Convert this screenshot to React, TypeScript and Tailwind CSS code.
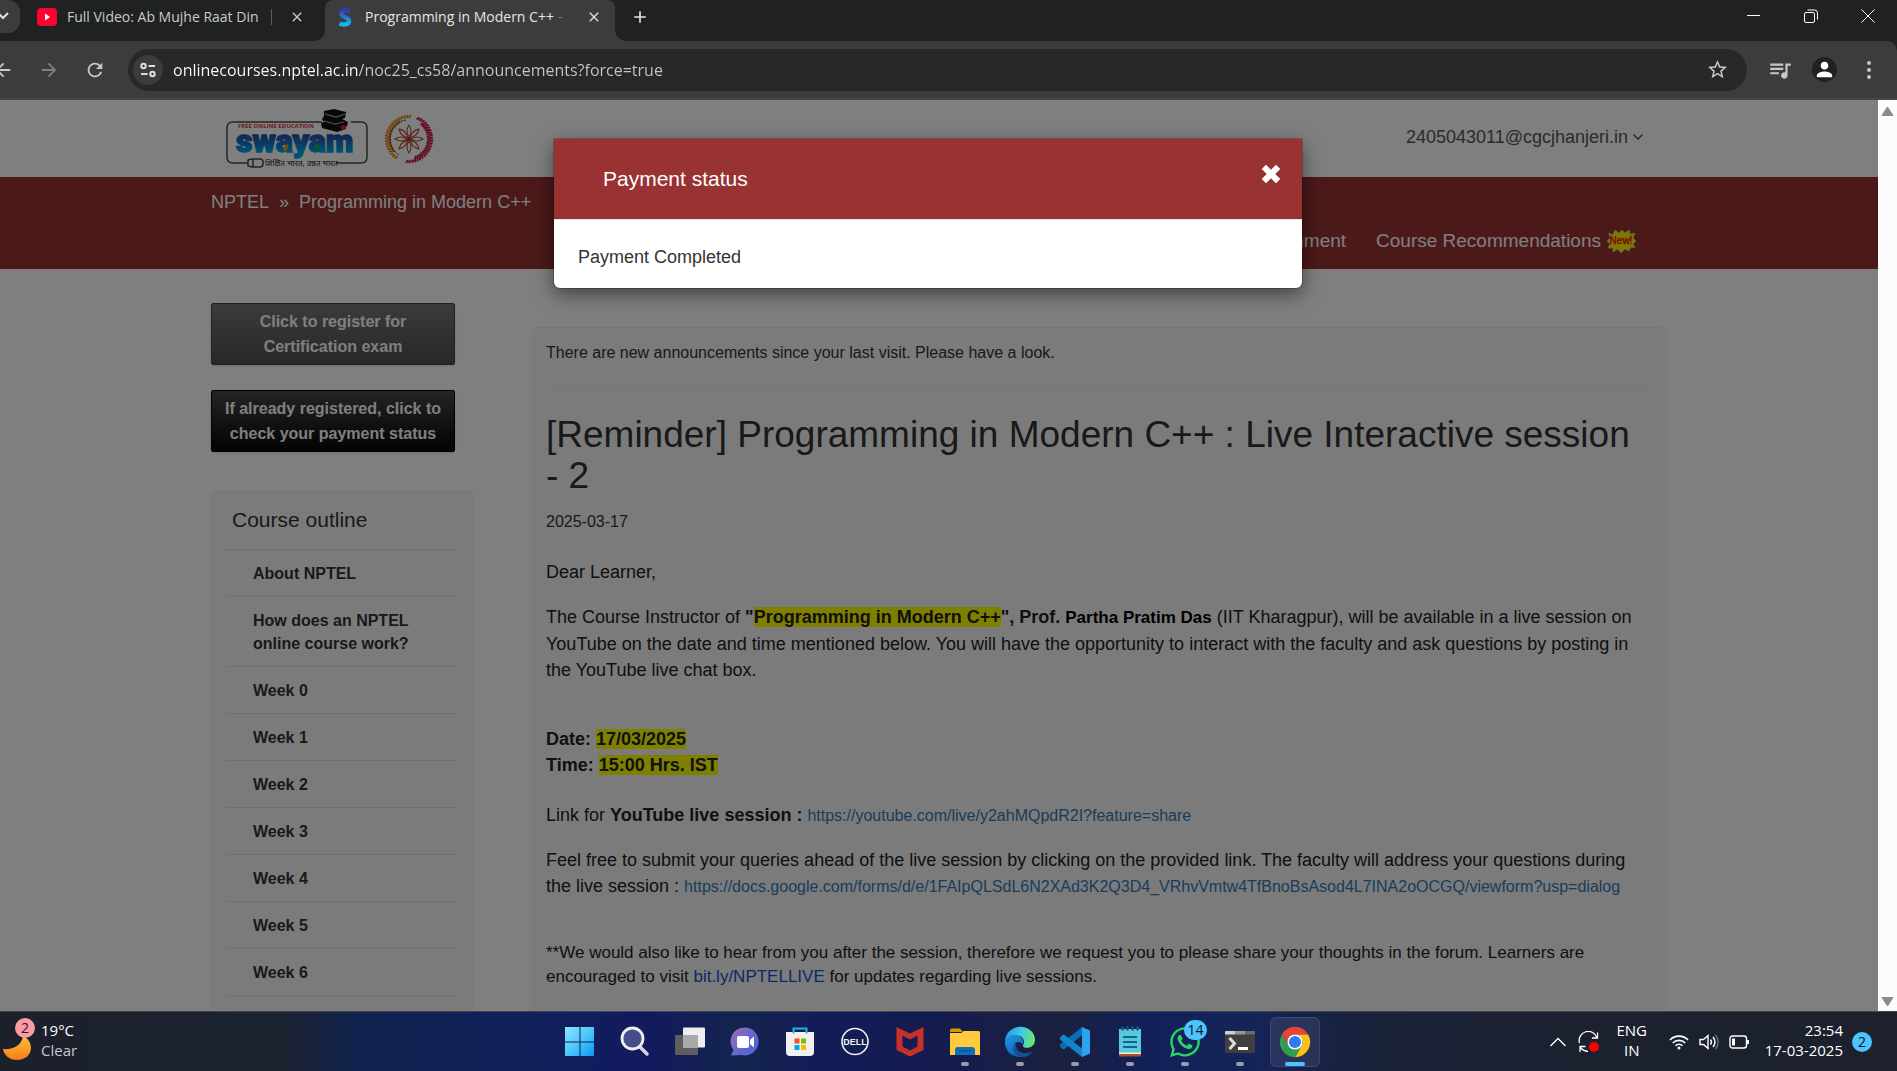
import type { ReactNode } from "react";
import { FaWhatsapp } from "react-icons/fa";
import { MdQueueMusic, MdPerson, MdStarOutline, MdClose, MdArrowBack, MdArrowForward, MdRefresh, MdAdd } from "react-icons/md";

function TabStrip() {
  return (
    <div className="flex h-[41px] shrink-0 justify-between bg-[#1f2221] text-[#e3e3e3]">
      <div className="flex items-start">
        <button aria-label="Search tabs" className="flex h-[33px] w-5 items-center justify-center rounded-r-xl bg-[#3c3c3c]">
          <svg viewBox="0 0 20 33" className="h-[33px] w-5" fill="none" stroke="#e3e3e3" strokeWidth="2">
            <path d="M-2 13l5 5 5-5" />
          </svg>
        </button>
        <div role="tab" className="flex h-[33px] w-[293px] items-center pl-[17px] text-[#c9cac9]">
          <svg viewBox="0 0 20 18" className="h-[18px] w-5 shrink-0">
            <rect width="20" height="18" rx="4" fill="#ff0033" />
            <path d="M8 5.500v7l5-3.500z" fill="#fff" />
          </svg>
          <span className="ml-[10px] whitespace-nowrap text-sm">Full Video: Ab Mujhe Raat Din</span>
          <span className="ml-auto h-4 w-px bg-[#5b5d5c]" />
          <button aria-label="Close tab" className="mr-2 ml-[17px]">
            <MdClose className="size-4" />
          </button>
        </div>
        <svg viewBox="0 0 12 41" className="h-[41px] w-3 shrink-0">
          <path d="M12 0v41H0c8 0 12-5 12-12z" fill="#3c3c3c" />
        </svg>
        <div role="tab" aria-selected="true" className="flex h-[41px] w-[290px] items-start rounded-t-lg bg-[#3c3c3c]">
          <div className="flex h-[33px] w-full items-center pl-3">
            <svg viewBox="0 0 16 24" className="h-6 w-4 shrink-0">
              <defs>
                <linearGradient id="fav" x1="0" y1="0" x2="0" y2="1">
                  <stop offset="0" stopColor="#3a3aa8" />
                  <stop offset="1" stopColor="#12b8f0" />
                </linearGradient>
              </defs>
              <path d="M13 6C10 4.500 4.500 4.500 4.500 8.500c0 4 7.500 3 7.500 7.500 0 4-6 4-9.500 2.500" fill="none" stroke="url(#fav)" strokeWidth="4.500" />
            </svg>
            <span className="ml-3 whitespace-nowrap text-sm text-[#e6e6e6]">Programming in Modern C++</span>
            <span className="ml-1 text-sm text-[#777]">-</span>
            <button aria-label="Close tab" className="ml-auto mr-[13px]">
              <MdClose className="size-4" />
            </button>
          </div>
        </div>
        <svg viewBox="0 0 12 41" className="h-[41px] w-3 shrink-0">
          <path d="M0 0v41h12C4 41 0 36 0 29z" fill="#3c3c3c" />
        </svg>
        <button aria-label="New tab" className="ml-[3px] flex h-[33px] w-5 items-center justify-center">
          <MdAdd className="size-5 shrink-0" />
        </button>
      </div>
      <div className="flex h-8 items-center gap-[43px] pr-[22px]">
        <button aria-label="Minimize">
          <svg viewBox="0 0 14 14" className="size-[14px]" stroke="#fff" fill="none">
            <path d="M0 6.500h13" />
          </svg>
        </button>
        <button aria-label="Restore">
          <svg viewBox="0 0 14 14" className="size-[14px]" stroke="#fff" fill="none">
            <rect x=".5" y="3.500" width="10" height="10" rx="1.500" />
            <path d="M3.500 1h7a3 3 0 0 1 3 3v6.500" />
          </svg>
        </button>
        <button aria-label="Close window">
          <svg viewBox="0 0 14 14" className="size-[14px]" stroke="#fff" fill="none">
            <path d="M.5.5l13 13M13.500.5l-13 13" />
          </svg>
        </button>
      </div>
    </div>
  );
}

function Toolbar() {
  return (
    <div className="shrink-0 bg-[#1f2221]">
      <div className="flex h-[59px] items-center rounded-tr-[10px] border-b-2 border-[#474747] bg-[#3c3c3c] text-[#c7c7c7]">
        <button aria-label="Back" className="-ml-2">
          <MdArrowBack className="size-[22px]" />
        </button>
        <button aria-label="Forward" className="ml-6 text-[#7f7f7f]">
          <MdArrowForward className="size-[22px]" />
        </button>
        <button aria-label="Reload" className="ml-6">
          <MdRefresh className="size-[22px]" />
        </button>
        <div className="ml-[22px] flex h-[42px] flex-1 items-center rounded-full bg-[#282828] pr-[18px] pl-[5px]">
          <button aria-label="Site information" className="flex size-[30px] items-center justify-center rounded-full bg-[#3c3c3c]">
            <svg viewBox="0 0 18 18" className="size-[18px]" fill="none" stroke="#dedede" strokeWidth="2">
              <circle cx="4.500" cy="5" r="2.200" />
              <path d="M9.500 5H16M2 13h6.500" />
              <circle cx="13.500" cy="13" r="2.200" />
            </svg>
          </button>
          <input
            aria-label="Address"
            defaultValue="onlinecourses.nptel.ac.in/noc25_cs58/announcements?force=true"
            className="ml-[10px] h-8 flex-1 bg-[linear-gradient(90deg,#ffffff_185px,#c7c7c7_185px)] bg-clip-text text-base text-transparent outline-none"
          />
          <button aria-label="Bookmark">
            <MdStarOutline className="size-[23px]" />
          </button>
        </div>
        <button aria-label="Media controls" className="ml-5">
          <MdQueueMusic className="size-[26px]" />
        </button>
        <button aria-label="Profile" className="ml-[19px] flex size-[25px] items-center justify-center rounded-full bg-[#1f2221]">
          <MdPerson className="size-[23px] text-white" />
        </button>
        <button aria-label="Menu" className="mr-[22px] ml-[26px] flex w-3 justify-center">
          <svg viewBox="0 0 4 20" className="h-5 w-1" fill="#c7c7c7">
            <circle cx="2" cy="3" r="2" />
            <circle cx="2" cy="10" r="2" />
            <circle cx="2" cy="17" r="2" />
          </svg>
        </button>
      </div>
    </div>
  );
}

function SwayamLogo() {
  return (
    <svg viewBox="0 0 142 60" className="h-[60px] w-[142px]" role="img" aria-label="Swayam">
      <defs>
        <linearGradient id="sw" x1="0" y1="0" x2="0" y2="1">
          <stop offset=".2" stopColor="#2e3192" />
          <stop offset=".8" stopColor="#00a4e4" />
        </linearGradient>
      </defs>
      <path d="M96 13H7Q1 13 1 19v29q0 6 6 6h14M110 54h25q6 0 6-6V19q0-6-6-6h-10" fill="none" stroke="#4a4a4a" strokeWidth="1.500" />
      <text x="12" y="19" fontSize="6" fontWeight="700" fill="#e03040" fontFamily="Open Sans, sans-serif">FREE ONLINE EDUCATION</text>
      <text x="10" y="43" fontSize="32" fontWeight="900" fill="url(#sw)" stroke="url(#sw)" strokeWidth="1.500" fontFamily="Roboto, sans-serif">swayam</text>
      <path d="M58 42c-2-4 1-6 3-7 2 3 1 7-3 7z" fill="#f7941d" />
      <path d="M90 42c-2-4 1-6 3-7 2 3 1 7-3 7z" fill="#1da64a" />
      <path d="M98 2l10-2 12 3-1 6-3 1 6 3-1 4-2 1 1 2-9 3-15-4-1-5 3-1-2-3 2-3z" fill="#111" />
      <path d="M99 5l11 3 9-3M98 12l11 3 9-2" stroke="#aaa" strokeWidth="1.200" fill="none" />
      <path d="M114 18l3-2 3 1 1-1-1 3-3 2z" fill="#ed1c24" />
      <path d="M22 51l4-1h8q3 0 3 3v2q0 3-3 3h-8l-4-1zM27 50v8" fill="none" stroke="#444" strokeWidth="1.500" />
      <text x="39" y="57" fontSize="8" fill="#222" fontFamily="Noto Sans, sans-serif">शिक्षित भारत, उन्नत भारत</text>
    </svg>
  );
}

const GOLD = Array.from({ length: 22 }, (_, i) => 125 + i * 7);
const CRIMSON = Array.from({ length: 24 }, (_, i) => -66 + i * 7);

function NptelEmblem() {
  return (
    <svg viewBox="0 0 50 50" className="size-[50px]" role="img" aria-label="NPTEL">
      {GOLD.map((a) => (
        <path key={a} d={a > 250 || a < 140 ? "M21 -1l3 2" : "M18 -2l6 3"} stroke="#e0912c" strokeWidth="2" transform={"translate(25 25) rotate(" + a + ")"} />
      ))}
      {CRIMSON.map((a) => (
        <path key={a} d={a < -45 || a > 80 ? "M21 -1l3 2" : "M18 -2l6 3"} stroke="#c8184a" strokeWidth="2" transform={"translate(25 25) rotate(" + a + ")"} />
      ))}
      <path d="M22 6A19 19 0 0 0 15 41" fill="none" stroke="#222" strokeWidth="1" strokeDasharray="2 1" />
      {[0, 45, 90, 135, 180, 225, 270, 315].map((a) => (
        <path key={a} d="M2 0Q8 -4 14 0Q8 4 2 0z" fill="none" stroke={a % 90 ? "#b0453c" : "#a85a28"} strokeWidth="1.100" transform={"translate(25 25) rotate(" + a + ")"} />
      ))}
      <circle cx="25" cy="25" r="2" fill="#c8184a" />
    </svg>
  );
}

function NewBadge() {
  return (
    <svg viewBox="0 0 30 24" className="h-6 w-[30px]" role="img" aria-label="New">
      <path d="M3 4l4 2 2-5 4 3 3-3 3 3 4-3 1 4 5-1-2 5 3 3-3 3 2 4-4-1-2 4-4-2-4 4-3-4-5 3 0-4-5 0 2-4-3-3 3-3z" fill="#fff200" stroke="#c9c98a" strokeWidth=".8" />
      <text x="15" y="15" fontSize="10" textAnchor="middle" fill="#f01010" stroke="#f01010" strokeWidth=".4" fontFamily="Liberation Sans, sans-serif">New!</text>
    </svg>
  );
}

const OUTLINE = ["About NPTEL", "How does an NPTEL online course work?", "Week 0", "Week 1", "Week 2", "Week 3", "Week 4", "Week 5", "Week 6"];

function Sidebar() {
  return (
    <aside className="w-[262px] shrink-0 pt-[34px]">
      <button className="block h-[62px] w-[244px] rounded-xs border border-[#444] bg-linear-to-b from-[#777] to-[#505050] text-base leading-[25px] font-bold text-white shadow">
        Click to register for
        <br />
        Certification exam
      </button>
      <button className="mt-[25px] block h-[62px] w-[244px] rounded-xs border border-black bg-linear-to-b from-[#484848] to-[#080808] text-base leading-[25px] font-bold text-white shadow">
        If already registered, click to
        <br />
        check your payment status
      </button>
      <nav className="mt-[38px] rounded-md border border-[#f0f0f0] bg-[#f7f7f7] px-[13px] pt-[14px] pb-20">
        <h2 className="px-[7px] pb-[14px] text-[21px] leading-[30px] text-[#333]">Course outline</h2>
        <ul className="border-t border-[#ddd]">
          {OUTLINE.map((o) => (
            <li key={o} className="border-b border-[#e2e2e2] pt-3 pr-10 pb-[11px] pl-7 text-base leading-[23px] font-bold text-[#333]">
              <a href="#unit">{o}</a>
            </li>
          ))}
        </ul>
      </nav>
    </aside>
  );
}

function Mark({ children }: { children: ReactNode }) {
  return <mark className="bg-[#ffff00] text-[#222]">{children}</mark>;
}

function Announcement() {
  return (
    <main className="min-w-0 flex-1 pt-[58px]">
      <article className="rounded-md border border-[#f0f0f0] bg-[#f7f7f7] px-[13px] pt-[13px] pb-20 text-lg leading-[26px] text-[#222]">
        <p className="text-base leading-6 text-[#333]">There are new announcements since your last visit. Please have a look.</p>
        <hr className="mt-6 border-[#ececec]" />
        <h1 className="mt-6 text-[37px] leading-[41px] text-[#333]">
          [Reminder] Programming in Modern C++ : Live Interactive session
          <br />- 2
        </h1>
        <p className="mt-[14px] text-base leading-6 text-[#333]">2025-03-17</p>
        <p className="mt-[25px]">Dear Learner,</p>
        <p className="mt-[19px]">
          The Course Instructor of{" "}
          <b>
            "<Mark>Programming in Modern C++</Mark>", Prof. <span className="text-[17px] text-black">Partha Pratim Das</span>
          </b>{" "}
          (IIT Kharagpur), will be available in a live session on
          <br />
          YouTube on the date and time mentioned below. You will have the opportunity to interact with the faculty and ask questions by posting in
          <br />
          the YouTube live chat box.
        </p>
        <p className="mt-[43px] font-bold">
          Date: <Mark>17/03/2025</Mark>
          <br />
          Time: <Mark>15:00 Hrs. IST</Mark>
        </p>
        <p className="mt-6">
          Link for <b>YouTube live session :</b>{" "}
          <a href="#live" className="text-base text-[#337ab7]">
            https://youtube.com/live/y2ahMQpdR2I?feature=share
          </a>
        </p>
        <p className="mt-[19px]">
          Feel free to submit your queries ahead of the live session by clicking on the provided link. The faculty will address your questions during
          <br />
          the live session :{" "}
          <a href="#form" className="text-base text-[#337ab7]">
            https://docs.google.com/forms/d/e/1FAIpQLSdL6N2XAd3K2Q3D4_VRhvVmtw4TfBnoBsAsod4L7INA2oOCGQ/viewform?usp=dialog
          </a>
        </p>
        <p className="mt-[42px] text-[17px] leading-6">
          **We would also like to hear from you after the session, therefore we request you to please share your thoughts in the forum. Learners are
          <br />
          encouraged to visit{" "}
          <a href="#nptellive" className="text-[#1155cc]">
            bit.ly/NPTELLIVE
          </a>{" "}
          for updates regarding live sessions.
        </p>
      </article>
    </main>
  );
}

function PaymentDialog() {
  return (
    <div className="absolute inset-0 flex items-start justify-center bg-black/50 pt-[39px] pr-[22px]">
      <section role="dialog" aria-label="Payment status" className="w-[748px] rounded-b-md bg-white shadow-[0_6px_19px_rgba(0,0,0,0.5),0_0_0_1px_rgba(0,0,0,0.2)]">
        <header className="flex h-[81px] justify-between border-b border-[#e5e5e5] bg-[#993333] pr-5 pl-[49px] text-white">
          <h2 className="pt-[26px] text-[21px] leading-7">Payment status</h2>
          <button aria-label="Close" className="mt-6 flex size-[22px] items-center justify-center">
            <svg viewBox="0 0 20 20" className="size-[22px]">
              <path d="M3.500 3.500l13 13M16.500 3.500l-13 13" stroke="#fff" strokeWidth="5.500" />
            </svg>
          </button>
        </header>
        <p className="px-6 pt-6 pb-[18px] text-lg leading-[26px] text-[#333]">Payment Completed</p>
      </section>
    </div>
  );
}

function WebPage() {
  return (
    <div className="flex min-h-0 flex-1 bg-white font-['Liberation_Sans',Arial,sans-serif]">
      <div className="relative min-w-0 flex-1 overflow-hidden">
        <header className="mx-auto flex h-[77px] max-w-[1456px] items-center justify-between pr-6 pl-[15px]">
          <div className="flex items-center gap-4">
            <SwayamLogo />
            <NptelEmblem />
          </div>
          <button className="flex items-center gap-[5px] pb-1 text-lg text-[#555]">
            2405043011@cgcjhanjeri.in
            <svg viewBox="0 0 10 6" className="h-[6px] w-[10px]" fill="none" stroke="#444" strokeWidth="1.300">
              <path d="M.5.5L5 5 9.500.5" />
            </svg>
          </button>
        </header>
        <div className="bg-[#993333] text-white">
          <div className="mx-auto flex h-[92px] max-w-[1456px] justify-between pr-[31px]">
            <div className="flex items-start gap-[10px] pt-3 text-lg leading-[26px]">
              <a href="#nptel">NPTEL</a>
              <span>»</span>
              <a href="#course">Programming in Modern C++</a>
            </div>
            <nav className="flex items-end gap-[30px] pb-[15px] text-[19px] leading-[26px]">
              <a href="#review">Review Assignment</a>
              <a href="#recommendations" className="flex items-center gap-[5px]">
                Course Recommendations
                <NewBadge />
              </a>
            </nav>
          </div>
        </div>
        <div className="mx-auto flex max-w-[1456px] gap-[59px]">
          <Sidebar />
          <Announcement />
        </div>
        <PaymentDialog />
      </div>
      <div className="flex w-[19px] shrink-0 flex-col items-center justify-between bg-[#fcfcfc] pt-[6px] pb-1">
        <svg viewBox="0 0 13 11" className="h-[11px] w-[13px]">
          <path d="M6.500 1L12 9.500H1z" fill="#8b8b8b" stroke="#8b8b8b" strokeLinejoin="round" />
        </svg>
        <svg viewBox="0 0 13 11" className="h-[11px] w-[13px]">
          <path d="M6.500 10L12 1.500H1z" fill="#8b8b8b" stroke="#8b8b8b" strokeLinejoin="round" />
        </svg>
      </div>
    </div>
  );
}

function Pic({ children }: { children: ReactNode }) {
  return (
    <svg viewBox="0 0 32 32" className="size-8">
      {children}
    </svg>
  );
}

function WindowsIcon() {
  return (
    <Pic>
      <defs>
        <linearGradient id="win" gradientUnits="userSpaceOnUse" x1="2" y1="2" x2="30" y2="30">
          <stop stopColor="#8ae1ff" />
          <stop offset=".5" stopColor="#4cc8fa" />
          <stop offset="1" stopColor="#0a95f5" />
        </linearGradient>
      </defs>
      <path d="M1 1h14.500v14.500H1zM16.500 1H30v14.500H16.500zM1 16.500h14.500V30H1zM16.500 16.500H30V30H16.500z" fill="url(#win)" />
    </Pic>
  );
}

function SearchIcon() {
  return (
    <Pic>
      <path d="M21 21l7 7" stroke="#d5d5d5" strokeWidth="3.500" strokeLinecap="round" />
      <circle cx="13.500" cy="12.500" r="10.500" fill="#454d8c" stroke="#eee" strokeWidth="2.800" />
    </Pic>
  );
}

function TaskViewIcon() {
  return (
    <Pic>
      <rect x="1" y="9" width="23" height="20" rx="1" fill="#5e5e5e" />
      <rect x="9" y="1.500" width="22" height="20" rx="1" fill="#eeeeee" />
      <path d="M9 9h15v12.500H9z" fill="#a9a9a9" />
    </Pic>
  );
}

function ChatIcon() {
  return (
    <Pic>
      <defs>
        <linearGradient id="chat" x1="0" y1="0" x2="1" y2=".8">
          <stop stopColor="#a56fa6" />
          <stop offset=".5" stopColor="#6a68cf" />
          <stop offset="1" stopColor="#5360cf" />
        </linearGradient>
      </defs>
      <path d="M16 1.500a14 14 0 1 1-4 27.500L2 29.500l2.500-5.500A14 14 0 0 1 16 1.500z" fill="url(#chat)" />
      <rect x="8" y="10" width="12" height="12" rx="2" fill="#fff" />
      <path d="M21 14l4-3.500v11L21 18z" fill="#fff" />
    </Pic>
  );
}

function StoreIcon() {
  return (
    <Pic>
      <path d="M2 6h28v20q0 4-4 4H6q-4 0-4-4z" fill="#f0f0f0" />
      <path d="M9.500 7.500V2.500h13V7.500" fill="none" stroke="#1fb2f0" strokeWidth="2" />
      <path d="M10.500 12.500h5v5h-5z" fill="#f25022" />
      <path d="M17 12.500h5v5h-5z" fill="#7fba00" />
      <path d="M10.500 19h5v5h-5z" fill="#00a4ef" />
      <path d="M17 19h5v5h-5z" fill="#ffb900" />
    </Pic>
  );
}

function DellIcon() {
  return (
    <Pic>
      <circle cx="16" cy="15.500" r="13" fill="none" stroke="#f2f2f2" strokeWidth="1.600" />
      <text x="16" y="19" fontSize="9" fontWeight="700" textAnchor="middle" fill="#f2f2f2" fontFamily="Liberation Sans, sans-serif">DELL</text>
    </Pic>
  );
}

function McAfeeIcon() {
  return (
    <Pic>
      <path d="M2.500 1L16 7.500 29.500 1v23L16 30.500 2.500 24zM8.500 9.500v11L16 24.500l7.500-4v-11L16 13.500z" fill="#c8302c" fillRule="evenodd" />
    </Pic>
  );
}

function FolderIcon() {
  return (
    <Pic>
      <path d="M1 4q0-1.500 1.500-1.500H11l3 3.500H1z" fill="#dc9500" />
      <path d="M1 7h11l3-2h14.500Q31 5 31 6.500V29H1z" fill="#ffca3e" />
      <path d="M6 29v-5q0-3 3-3h14q3 0 3 3v5z" fill="#0f6fbd" />
      <path d="M10 25h12" stroke="#0b4f8c" strokeWidth="1.500" />
    </Pic>
  );
}

function EdgeIcon() {
  return (
    <Pic>
      <defs>
        <linearGradient id="edgeTop" x1="0" y1=".3" x2="1" y2=".5">
          <stop stopColor="#239be0" />
          <stop offset=".5" stopColor="#3cc8e8" />
          <stop offset="1" stopColor="#6be86a" />
        </linearGradient>
        <linearGradient id="edgeLeft" x1="0" y1="0" x2=".5" y2="1">
          <stop stopColor="#1f9be6" />
          <stop offset="1" stopColor="#0d62b5" />
        </linearGradient>
      </defs>
      <path d="M1 14.500C2 6 8.500.8 16 .8c9 0 15 6 15 13 0 5.500-4 8-8 8-3 0-4.600-1.200-4-2.800 2-2 1.500-9.500-7-9.500-5 0-8.500 2-11 5z" fill="url(#edgeTop)" />
      <path d="M1 15.500C2.500 7.500 15 6.500 18.500 13.500c.8 1.800.8 3.500.2 5C16 14 10.500 16 10.500 21c0 5 4.500 9.500 9.500 9.500C9 33 .3 25.500 1 15.500z" fill="url(#edgeLeft)" />
      <path d="M12.500 15.500c-2.500 6 2.500 11.500 9 11.500 3 0 5.500-.8 7.200-1.800C26.500 28.800 22.500 31 18 31 11 31 8.500 24 10 19c.5-1.500 1.500-2.800 2.500-3.500z" fill="#124f93" />
    </Pic>
  );
}

function CodeIcon() {
  return (
    <Pic>
      <path d="M23 1l8 3.500v23L23 31z" fill="#2aa4f0" />
      <path d="M23 1v8.500L5 23.500 3.500 23 1 20.500v-2z" fill="#0a6cb4" />
      <path d="M23 31v-8.500L5 8.500 3.500 9 1 11.500v2z" fill="#1285cc" />
    </Pic>
  );
}

function NotepadIcon() {
  return (
    <Pic>
      <path d="M5 27h22v3.500H5z" fill="#a8531a" />
      <path d="M5 25h22v3H5z" fill="#eee" />
      <path d="M5 3h22v23.500H5z" fill="#5cc7dc" />
      <path d="M9 11h14M9 16h14M9 21h14" stroke="#086a8a" strokeWidth="2" />
      <path d="M8.500 1.500v2M13.500 1.500v2M18.500 1.500v2M23.500 1.500v2" stroke="#0d5f80" strokeWidth="2.500" strokeLinecap="round" />
    </Pic>
  );
}

function WhatsAppIcon() {
  return (
    <span className="relative">
      <FaWhatsapp className="size-[34px] text-[#25d366]" />
      <span className="absolute -top-[5px] left-[16px] flex h-5 w-[23px] items-center justify-center rounded-full bg-[#4cc2ff] text-sm text-[#111]">14</span>
    </span>
  );
}

function TerminalIcon() {
  return (
    <Pic>
      <rect x="1" y="5" width="30" height="22" rx="1.500" fill="#3f3f3f" />
      <path d="M1 8.500V6q0-1 1-1h9v3.500z" fill="#d0d0d0" />
      <path d="M11 5h10v3.500H11z" fill="#999" />
      <path d="M21 5h9q1 0 1 1v2.500H21z" fill="#6a6a6a" />
      <path d="M5.500 12l5 5.500-5 5.500" fill="none" stroke="#ddd" strokeWidth="3" />
      <path d="M14 22.500h10" stroke="#fff" strokeWidth="3" />
    </Pic>
  );
}

function ChromeIcon() {
  return (
    <svg viewBox="3 3 42 42" className="size-8">
      <path d="M6.700 14A20 20 0 0 1 41.300 14H24A10 10 0 0 0 15.300 29z" fill="#ea4335" />
      <path d="M41.300 14A20 20 0 0 1 24 44l8.700-15A10 10 0 0 0 24 14z" fill="#fbc116" />
      <path d="M24 44A20 20 0 0 1 6.700 14l8.600 15a10 10 0 0 0 17.400 0z" fill="#2f9e4f" />
      <circle cx="24" cy="24" r="10" fill="#fff" />
      <circle cx="24" cy="24" r="8" fill="#2f7cf0" />
    </svg>
  );
}

const APPS: { name: string; icon: ReactNode; state?: "open" | "active" }[] = [
  { name: "Start", icon: <WindowsIcon /> },
  { name: "Search", icon: <SearchIcon /> },
  { name: "Task view", icon: <TaskViewIcon /> },
  { name: "Chat", icon: <ChatIcon /> },
  { name: "Store", icon: <StoreIcon /> },
  { name: "Dell", icon: <DellIcon /> },
  { name: "McAfee", icon: <McAfeeIcon /> },
  { name: "File Explorer", icon: <FolderIcon />, state: "open" },
  { name: "Edge", icon: <EdgeIcon />, state: "open" },
  { name: "Visual Studio Code", icon: <CodeIcon />, state: "open" },
  { name: "Notepad", icon: <NotepadIcon />, state: "open" },
  { name: "WhatsApp", icon: <WhatsAppIcon />, state: "open" },
  { name: "Terminal", icon: <TerminalIcon />, state: "open" },
  { name: "Chrome", icon: <ChromeIcon />, state: "active" },
];

function Taskbar() {
  return (
    <footer className="grid h-[60px] shrink-0 grid-cols-[1fr_auto_1fr] items-center border-t border-[#40454f] bg-[linear-gradient(90deg,#1b202b_0%,#1b2230_15%,#10224f_19%,#10205a_28%,#121a60_34%,#14244d_39%,#131c58_43%,#141c50_49%,#1b203e_56%,#122058_60%,#152458_66%,#19213a_72%,#1b2130_80%,#1c212c_100%)] pr-[22px] text-[15px] text-white">
      <button className="flex items-center text-left">
        <span className="relative h-12 w-9">
          <svg viewBox="0 0 36 48" className="h-12 w-9">
            <defs>
              <linearGradient id="moon" x1="0" y1="0" x2="0" y2="1">
                <stop stopColor="#ffc23a" />
                <stop offset="1" stopColor="#f27d1c" />
              </linearGradient>
            </defs>
            <path d="M3 31c10 1 19-4 20-13 5 2 8 7 8 12 0 7-6 12-14 12C9 42 4 37 3 31z" fill="url(#moon)" />
          </svg>
          <span className="absolute top-0 left-[15px] flex size-5 items-center justify-center rounded-full bg-[#ff99a4] text-sm text-[#222]">2</span>
        </span>
        <span className="ml-[5px] pb-1 leading-5">
          19°C
          <br />
          <span className="text-[#c5c8cc]">Clear</span>
        </span>
      </button>
      <div className="flex gap-[5px]">
        {APPS.map((a) => (
          <button key={a.name} aria-label={a.name} className={a.state === "active" ? "relative flex size-[50px] items-center justify-center rounded-md border border-white/10 bg-white/8" : "relative flex size-[50px] items-center justify-center"}>
            {a.icon}
            {a.state === "open" && <span className="absolute bottom-[1px] h-1 w-2 rounded-full bg-[#9a9cae]" />}
            {a.state === "active" && <span className="absolute bottom-0 h-1 w-5 rounded-full bg-[#4cc2ff]" />}
          </button>
        ))}
      </div>
      <div className="flex items-center justify-end pr-[3px]">
        <button aria-label="Hidden icons">
          <svg viewBox="0 0 16 10" className="h-[10px] w-4" fill="none" stroke="#fff" strokeWidth="1.300">
            <path d="M.5 9L8 1.500 15.500 9" />
          </svg>
        </button>
        <button aria-label="Update" className="ml-3">
          <svg viewBox="0 0 22 22" className="size-[22px]" fill="none" stroke="#fff" strokeWidth="1.300">
            <path d="M1.500 12A9 9 0 0 1 19 7M19.500 1.500V7H14M2 21v-5.500h5.500M2 16q3 4 8 4.500" />
            <circle cx="16" cy="16" r="5" fill="#ff0000" stroke="none" />
          </svg>
        </button>
        <button className="ml-[16px] w-[32px] pb-[3px] text-center leading-5">
          ENG
          <br />
          IN
        </button>
        <button aria-label="Network, sound and battery" className="ml-[21px] flex items-center gap-[10px]">
          <svg viewBox="0 0 20 16" className="h-4 w-5" fill="none" stroke="#fff" strokeWidth="1.600">
            <path d="M1 6a12.500 12.500 0 0 1 18 0M3.800 9a8.700 8.700 0 0 1 12.400 0M6.500 11.800a5 5 0 0 1 7 0" />
            <circle cx="10" cy="14" r="1.500" fill="#fff" stroke="none" />
          </svg>
          <svg viewBox="0 0 20 18" className="h-[18px] w-5" fill="none" stroke="#fff" strokeWidth="1.400">
            <path d="M1 6.500h3.500L9 2.500v13l-4.500-4H1zM11.500 6.500q2 2.500 0 5M14 4q4 5 0 10" />
            <path d="M16.500 2q5.500 7 0 14" stroke="#6b7079" />
          </svg>
          <svg viewBox="0 0 20 14" className="h-[14px] w-5" fill="none" stroke="#fff" strokeWidth="1.400">
            <rect x="1" y="1" width="16.500" height="12" rx="2.500" />
            <path d="M3 3.500h3v7H3z" fill="#fff" stroke="none" />
            <path d="M19 5v4" strokeWidth="2" />
          </svg>
        </button>
        <button className="ml-4 pb-1 text-right leading-5 whitespace-nowrap">
          23:54
          <br />
          17-03-2025
        </button>
        <span className="ml-[9px] flex size-5 items-center justify-center rounded-full bg-[#4cc2ff] text-sm text-[#111]">2</span>
      </div>
    </footer>
  );
}

export default function App() {
  return (
    <div className="flex h-screen flex-col overflow-hidden font-['Open_Sans','Noto_Sans',sans-serif]">
      <TabStrip />
      <Toolbar />
      <WebPage />
      <Taskbar />
    </div>
  );
}
